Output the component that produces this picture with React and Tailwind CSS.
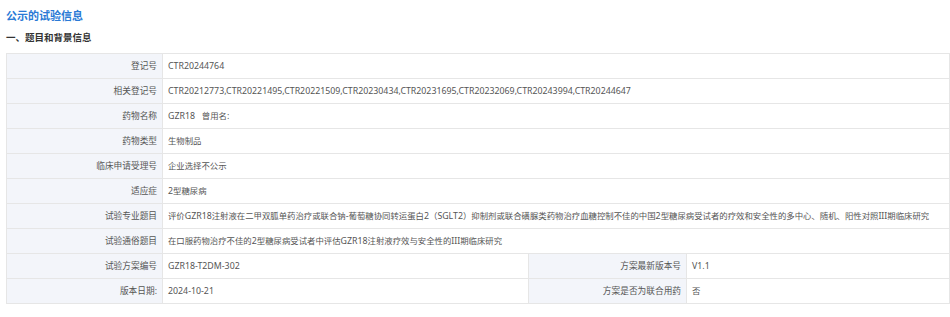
import React from 'react';

const rows = [
  { label: '登记号', value: 'CTR20244764' },
  {
    label: '相关登记号',
    value:
      'CTR20212773,CTR20221495,CTR20221509,CTR20230434,CTR20231695,CTR20232069,CTR20243994,CTR20244647',
  },
  { label: '药物名称', value: 'GZR18\u00a0\u00a0\u00a0曾用名:' },
  { label: '药物类型', value: '生物制品' },
  { label: '临床申请受理号', value: '企业选择不公示' },
  { label: '适应症', value: '2型糖尿病' },
  {
    label: '试验专业题目',
    value:
      '评价GZR18注射液在二甲双胍单药治疗或联合钠-葡萄糖协同转运蛋白2（SGLT2）抑制剂或联合磺脲类药物治疗血糖控制不佳的中国2型糖尿病受试者的疗效和安全性的多中心、随机、阳性对照III期临床研究',
  },
  {
    label: '试验通俗题目',
    value: '在口服药物治疗不佳的2型糖尿病受试者中评估GZR18注射液疗效与安全性的III期临床研究',
  },
];

const pairs = [
  ['试验方案编号', 'GZR18-T2DM-302', '方案最新版本号', 'V1.1'],
  ['版本日期:', '2024-10-21', '方案是否为联合用药', '否'],
];

// CJK runs render a little smaller than latin runs, like the source page's font
function Mixed({ text }) {
  const parts = text.split(/([\u3000-\u303f\u4e00-\u9fff\uff00-\uffef]+)/).filter(Boolean);
  return parts.map((p, i) =>
    /[\u3000-\u303f\u4e00-\u9fff\uff00-\uffef]/.test(p) ? (
      <span key={i} className="text-[8.4px]">{p}</span>
    ) : (
      <span key={i} className="text-[8.8px]">{p}</span>
    )
  );
}

function Label({ children }) {
  return (
    <div className="h-[25px] flex items-center justify-end pr-[5px] bg-[#f3f5fa] border-b border-r border-[#e6e6e6] text-[#555] text-[8.7px] leading-[12px] whitespace-nowrap">
      {children}
    </div>
  );
}

function Value({ children, span }) {
  return (
    <div
      className={`h-[25px] flex items-center pl-[5px] bg-white border-b border-r border-[#e6e6e6] text-[#555] text-[8.6px] leading-[12px] whitespace-nowrap overflow-hidden ${
        span ? 'col-span-3' : ''
      }`}
    >
      <span>
        <Mixed text={children} />
      </span>
    </div>
  );
}

export default function App() {
  return (
    <div
      className="w-[950px] h-[317px] bg-white overflow-hidden pl-[6px]"
      style={{ fontFamily: '"Noto Sans CJK SC", "Noto Sans", sans-serif' }}
    >
      <h1 className="pt-[8px] text-[11px] leading-[14px] font-bold text-[#2a7ad6]">公示的试验信息</h1>
      <h2 className="mt-[8px] text-[9.5px] leading-[14px] font-bold text-[#333]">一、题目和背景信息</h2>
      <div
        className="mt-[9px] grid grid-cols-[156px_366px_158px_1fr] border-t border-l border-[#e6e6e6]"
        style={{ fontFamily: '"Noto Sans", "Noto Sans CJK SC", sans-serif' }}
      >
        {rows.map((r) => (
          <React.Fragment key={r.label}>
            <Label>{r.label}</Label>
            <Value span>{r.value}</Value>
          </React.Fragment>
        ))}
        {pairs.map((p) => (
          <React.Fragment key={p[0]}>
            <Label>{p[0]}</Label>
            <Value>{p[1]}</Value>
            <Label>{p[2]}</Label>
            <Value>{p[3]}</Value>
          </React.Fragment>
        ))}
      </div>
    </div>
  );
}
